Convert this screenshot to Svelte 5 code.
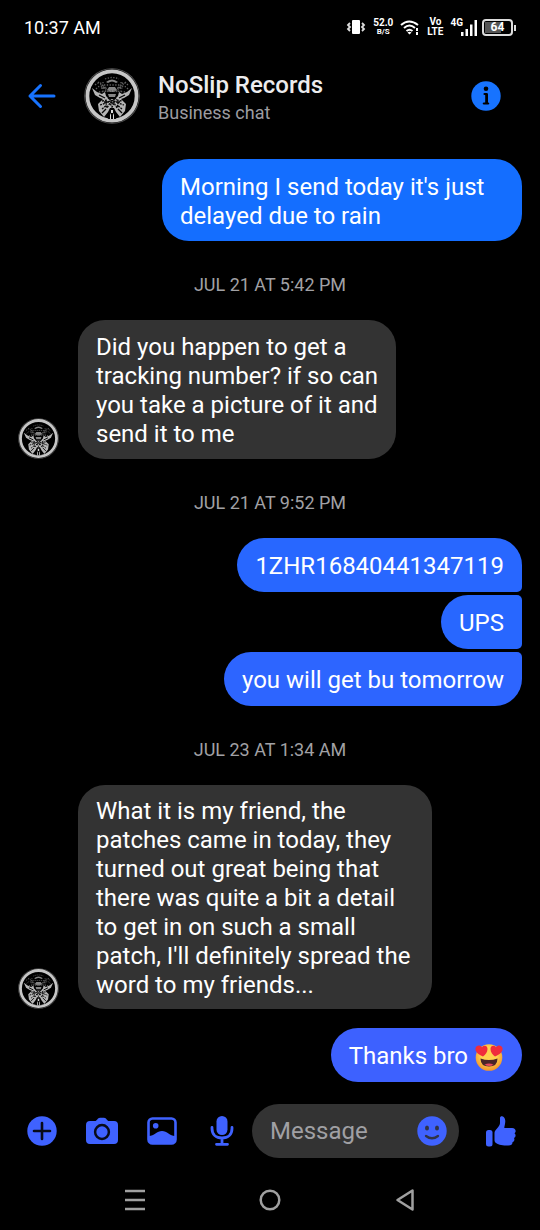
<script>
  const entries = [
    { kind: 'sent', tone: 'a', text: "Morning I send today it's just delayed due to rain" },
    { kind: 'time', text: 'JUL 21 AT 5:42 PM' },
    { kind: 'received', text: 'Did you happen to get a\ntracking number? if so can\nyou take a picture of it and\nsend it to me' },
    { kind: 'time', text: 'JUL 21 AT 9:52 PM' },
    { kind: 'sent', tone: 'b', shape: 'first', text: '1ZHR16840441347119' },
    { kind: 'sent', tone: 'b', shape: 'middle', text: 'UPS' },
    { kind: 'sent', tone: 'c', shape: 'last', text: 'you will get bu tomorrow' },
    { kind: 'time', text: 'JUL 23 AT 1:34 AM' },
    { kind: 'received', tall: true, text: "What it is my friend, the\npatches came in today, they\nturned out great being that\nthere was quite a bit a detail\nto get in on such a small\npatch, I'll definitely spread the\nword to my friends..." },
    { kind: 'sent', tone: 'd', shape: 'reply', text: 'Thanks bro', emoji: true }
  ];
  let draft = $state('');
</script>

{#snippet avatar()}
  <svg class="avatar" viewBox="0 0 56 56" aria-hidden="true">
    <circle cx="28" cy="28" r="27.8" fill="#555" />
    <circle cx="28" cy="28" r="27" fill="#000" />
    <circle cx="28" cy="28" r="24.6" fill="none" stroke="#c6c6c6" stroke-width="3.8" />
    <path d="M8 20 13 24 18 26 21 24 22 28 25 31 31 31 34 28 35 24 38 26 43 24 48 20 45 27 40 30 37 31 42 36 41 43 36 49 32 44 30 40H26L24 44 20 49 15 43 14 36 19 31 16 30 11 27Z" fill="#b5b5b5" />
    <path d="M22 14q6-5 12 0l-2 1q-4-3-8 0zM25 19h6l2 3-3 2h-4l-3-2zM24 26h8l-1 3h-6z" fill="#858585" />
    <g fill="none" stroke="#606060" stroke-width="1.300" stroke-dasharray="1.3 1.5">
      <path d="M11 17q7-6 9 5m24-5q-7-6-9 5M12 21q6-7 12 3m20-3q-6-7-12 3M14 14l8 6m20-6-8 6M15 24l9-1m17 1-9-1M21 11q7-3 14 0M20 17h16M21 23h14M17 20h6m10 0h6M19 14v10m18-10v10" />
    </g>
    <g fill="none" stroke="#080808" stroke-width="1.300">
      <path d="M18 33l5-1-2 3 5-2 2 3 2-3 5 2-2-3 5 1M16 37l6-2 1 5 3-5 2 4 2-4 3 5 1-5 6 2M18 41l5-4m15 4-5-4M20 34h16" stroke-dasharray="2 1" />
      <path d="M15 27l6 3m20-3-6 3M18 45l4-4m16 4-4-4M24 30l4 3 4-3" />
    </g>
    <path d="M24 51l2-10h4l2 10z" fill="#050505" />
    <path d="M27 42h2v3h-2zM26 47l1-2v6h-1zM30 47l-1-2v6h1z" fill="#ddd" />
  </svg>
{/snippet}

<div class="screen">
  <div class="status">
    <time>10:37 AM</time>
    <div class="indicators">
      <svg width="20" height="20" viewBox="0 0 20 20" aria-hidden="true"><rect x="6" y="3" width="8" height="14" rx="1" fill="#fff" /><path d="M4 6 2 8l2 2-2 2 2 2M16 6l2 2-2 2 2 2-2 2" fill="none" stroke="#ddd" stroke-width="1.800" /></svg>
      <span class="stack speed"><b>52.0</b><small>B/S</small></span>
      <svg width="20" height="18" viewBox="0 0 20 18" aria-hidden="true"><path d="M1 7q8-7 17 0M4 10q5.500-5 11 0M6.500 13q3-2.500 6 0" fill="none" stroke="#fff" stroke-width="2" /><path d="M7.500 14.500q2-1.500 4 0l-2 2zM16 10h2v3h-2zM16 14h2v3h-2z" fill="#fff" /></svg>
      <span class="stack volte"><b>Vo</b><b>LTE</b></span>
      <span class="cell"><b>4G</b><svg width="17" height="17" viewBox="0 0 17 17" aria-hidden="true"><path d="M0 13h2.500v4H0zM4.500 10H7v7H4.500zM9 5.500h2.500V17H9zM13.500 1H16v16h-2.500z" fill="#fff" /></svg></span>
      <span class="battery"><span>64</span></span>
    </div>
  </div>

  <header>
    <button class="back" aria-label="Back">
      <svg width="30" height="30" viewBox="0 0 30 30"><path d="M27 15H3M13.500 4.500 3 15l10.500 10.500" fill="none" stroke="currentColor" stroke-width="3" stroke-linecap="round" stroke-linejoin="round" /></svg>
    </button>
    <span class="portrait">{@render avatar()}</span>
    <div class="who"><h1>NoSlip Records</h1><p>Business chat</p></div>
    <button class="info" aria-label="Chat information">
      <svg width="30" height="30" viewBox="0 0 30 30"><circle cx="15" cy="15" r="14.700" fill="currentColor" /><circle cx="15" cy="7.800" r="2.300" /><path d="M12.700 12h3q1.300 0 1.300 1.300v8.200q1.300 0 1.300 1t-1.300 1h-4q-1.300 0-1.300-1t1.300-1h1.200v-7.400h-.500q-1.300 0-1.300-1.100t1.600-1z" /></svg>
    </button>
  </header>

  <main>
    {#each entries as entry}
      {#if entry.kind === 'time'}
        <time class="divider">{entry.text}</time>
      {:else if entry.kind === 'received'}
        <div class="received" class:tall={entry.tall}>
          <span class="sender">{@render avatar()}</span>
          <p class="bubble">{entry.text}</p>
        </div>
      {:else}
        <p class="bubble sent {entry.tone} {entry.shape ?? ''}">{entry.text}{#if entry.emoji}{' '}<svg class="emoji" viewBox="0 0 28 28" role="img" aria-label="Smiling face with heart eyes">
          <defs><radialGradient id="face" cx=".5" cy=".4" r=".6"><stop offset=".5" stop-color="#ffd34e" /><stop offset="1" stop-color="#f2922c" /></radialGradient></defs>
          <circle cx="14" cy="14.500" r="13.300" fill="url(#face)" />
          <path d="M5.500 15.500q8.500 3 17 0 0 8-8.500 8t-8.500-8z" fill="#4b2528" /><path d="M9.500 21.800q4.500-2.500 9 0-4 2.500-9 0z" fill="#e8485c" />
          <path d="M8 13.500C2 11 0 8 .500 5 1.200 2 5.200 1.600 7 4.300 9 1.800 12.500 2.700 12.500 6c0 3-2 5.500-4.500 7.500z" fill="#f02d3c" />
          <path d="M20 13.500C26 11 28 8 27.500 5c-.700-3-4.700-3.400-6.500-.700-2-2.500-5.500-1.600-5.500 1.700 0 3 2 5.500 4.500 7.500z" fill="#f02d3c" />
        </svg>{/if}</p>
      {/if}
    {/each}
  </main>

  <footer>
    <div class="tools">
      <button aria-label="More actions"><svg width="30" height="30" viewBox="0 0 30 30"><circle cx="15" cy="15" r="14.700" fill="currentColor" /><path d="M15 7v16M7 15h16" stroke="#080b18" stroke-width="2.600" stroke-linecap="round" /></svg></button>
      <button aria-label="Camera"><svg width="32" height="30" viewBox="0 0 32 30"><path d="M4 5h5c2 0 2.500-3.300 5-3.300h4c2.500 0 3 3.300 5 3.300h5q4 0 4 4v15q0 4-4 4H4q-4 0-4-4V9q0-4 4-4z" fill="currentColor" /><circle cx="16" cy="16" r="6.900" fill="currentColor" stroke="#080b18" stroke-width="2.500" /></svg></button>
      <button aria-label="Gallery"><svg width="30" height="30" viewBox="0 0 30 30"><rect x="1.500" y="2.500" width="27" height="25" rx="4" fill="none" stroke="currentColor" stroke-width="2.600" /><circle cx="8.700" cy="9.700" r="2.800" fill="currentColor" /><path d="M2 20c5 0 8-5 13-5s8 5 13 5v4q0 3-3 3H5q-3 0-3-3z" fill="currentColor" /></svg></button>
      <button aria-label="Voice message"><svg width="30" height="32" viewBox="0 0 30 32"><rect x="9.500" y="1" width="11" height="19" rx="5.500" fill="currentColor" /><path d="M5 12.500v1c0 6 4 9.500 10 9.500s10-3.500 10-9.500v-1M15 23v6M9.500 29.300h11" fill="none" stroke="currentColor" stroke-width="2.800" stroke-linecap="round" /></svg></button>
    </div>
    <div class="composer">
      <input type="text" placeholder="Message" aria-label="Message" bind:value={draft} />
      <button aria-label="Choose an emoji"><svg width="30" height="30" viewBox="0 0 30 30"><circle cx="15" cy="15" r="14.700" fill="currentColor" /><ellipse cx="10" cy="12" rx="2" ry="2.600" fill="#303346" /><ellipse cx="20" cy="12" rx="2" ry="2.600" fill="#303346" /><path d="M9 20q6 4.500 12 0" fill="none" stroke="#303346" stroke-width="2.300" stroke-linecap="round" /></svg></button>
    </div>
    <button class="like" aria-label="Send a like"><svg width="30" height="32" viewBox="0 0 30 32"><rect x="0" y="15" width="6.500" height="16.500" rx="2.500" fill="currentColor" /><path d="M9 16c2-3 5-5 5-8V3c0-3 5.300-2.500 5.300 3 0 3-1 5-1 7H26c4 0 4.500 4 2.500 5.200 1.700 1.600 1.300 3.800-.500 4.800 1 1.800 0 3.600-1.500 4.300 0 2.200-1.500 3.200-4 3.200-6 0-9.500-.200-12.500-2.500-1-.700-1.500-1.500-1.500-3V18q0-1.200.500-2z" fill="currentColor" /></svg></button>
  </footer>

  <nav aria-label="System navigation">
    <button aria-label="Recent apps"><svg width="24" height="24" viewBox="0 0 24 24"><path d="M2 3h20M2 12h20M2 21h20" stroke="currentColor" stroke-width="2.500" /></svg></button>
    <button aria-label="Home"><svg width="24" height="24" viewBox="0 0 24 24"><circle cx="12" cy="12" r="9.300" fill="none" stroke="currentColor" stroke-width="2.500" /></svg></button>
    <button aria-label="System back"><svg width="24" height="24" viewBox="0 0 24 24"><path d="M19.500 2.500v19L4.500 12z" fill="none" stroke="currentColor" stroke-width="2.500" stroke-linejoin="round" /></svg></button>
  </nav>
</div>

<style>
  :global(body) { background: #000; }
  .screen { display: flex; flex-direction: column; min-height: 100vh; background: #000; color: #fff; font-family: Roboto, sans-serif; }
  h1, p { margin: 0; }
  svg { display: block; flex: none; }
  button { display: flex; align-items: center; justify-content: center; padding: 0; border: 0; background: none; color: #3f62ff; cursor: pointer; }

  .status { display: flex; align-items: center; justify-content: space-between; box-sizing: border-box; height: 56px; padding: 0 27px 2px 24px; font-size: 18px; }
  .indicators { display: flex; align-items: center; gap: 7px; }
  .stack { display: flex; flex-direction: column; align-items: center; font-size: 10px; line-height: 10px; }
  .stack small { font-size: 8px; line-height: 8px; font-weight: 700; }
  .stack b { font-weight: 700; }
  .cell { display: flex; align-items: center; }
  .cell b { font-size: 10px; line-height: 10px; margin-right: -2px; padding-bottom: 8px; font-weight: 700; }
  .battery { position: relative; box-sizing: border-box; width: 31px; height: 17px; margin-left: -3px; border: 2px solid #ddd; border-radius: 4px; padding: 1px; }
  .battery::after { content: ''; position: absolute; right: -5px; top: 4px; width: 2px; height: 6px; background: #ddd; }
  .battery span { display: block; font-size: 12px; line-height: 11px; font-weight: 700; text-align: center; background: linear-gradient(90deg, #555 64%, #000 64%); }

  header { display: flex; align-items: center; height: 80px; padding: 0 39px 0 27px; }
  .back, .info { color: #1773ff; }
  .portrait { width: 56px; margin: 0 18px 0 27px; }
  .avatar { width: 100%; height: auto; }
  .who { flex: 1; padding-top: 6px; }
  h1 { font-size: 24px; line-height: 28px; font-weight: 500; color: #ececee; }
  .who p { font-size: 18px; line-height: 28px; color: #9c9ca0; }

  main { display: flex; flex: 1; flex-direction: column; align-items: flex-start; padding: 23px 18px 22px; }
  .bubble { box-sizing: border-box; padding: 14px 18px 11px; border-radius: 27px; font-size: 24px; line-height: 29px; white-space: pre-line; background: #333; }
  .sent { align-self: flex-end; max-width: 71.43%; }
  .a { padding-bottom: 10px; background: #146eff; }
  .b { background: #2867ff; }
  .c { background: #2d65ff; }
  .d { background: #3d61ff; }
  .first { border-bottom-right-radius: 5px; }
  .middle { border-top-right-radius: 5px; border-bottom-right-radius: 5px; margin-top: 3px; }
  .last { border-top-right-radius: 5px; margin-top: 3px; }
  .reply { margin-top: 19px; }
  .received { display: flex; align-items: flex-end; gap: 19px; }
  .received .bubble { padding-top: 13px; padding-bottom: 10px; }
  .tall .bubble { padding: 12px 22px 9px 18px; }
  .sender { width: 41px; }
  .divider { align-self: center; padding: 34px 0 25px; font-size: 18px; line-height: 20px; color: #a1a1a5; }
  .emoji { display: inline-block; width: 30px; height: 28px; vertical-align: bottom; }

  footer { display: flex; align-items: center; height: 54px; padding: 0 24px 0 27px; }
  .tools { display: flex; gap: 30px; margin-right: 15px; }
  .tools button { width: 30px; height: 32px; }
  .composer { display: flex; align-items: center; flex: 1; min-width: 0; box-sizing: border-box; height: 54px; padding: 0 12px 0 18px; border-radius: 27px; background: #333; }
  input { flex: 1; width: 0; min-width: 0; padding: 0; border: 0; outline: 0; background: none; color: #fff; font: 24px Roboto, sans-serif; }
  input::placeholder { color: #a0a0a4; opacity: 1; }
  .like { margin-left: 27px; }
  nav { display: flex; align-items: center; justify-content: space-around; box-sizing: border-box; height: 72px; padding: 12px 68px 0; }
  nav button { color: #a0a0a0; }
</style>
